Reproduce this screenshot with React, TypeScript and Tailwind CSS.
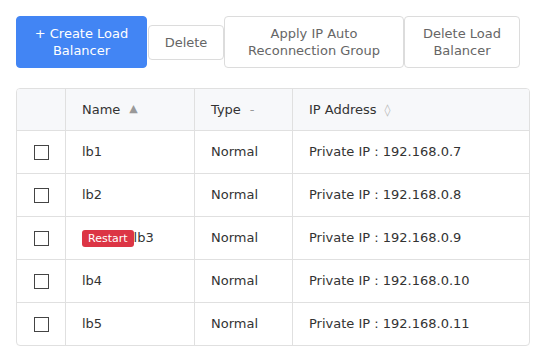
import React from "react";

const rows = [
  { name: "lb1", ip: "192.168.0.7" },
  { name: "lb2", ip: "192.168.0.8" },
  { name: "lb3", ip: "192.168.0.9", restart: true },
  { name: "lb4", ip: "192.168.0.10" },
  { name: "lb5", ip: "192.168.0.11" },
];

const cols = "grid grid-cols-[49px_129px_98px_236px]";

export default function App() {
  return (
    <div
      className="w-[546px] h-[362px] bg-white text-[13px] text-[#333]"
      style={{ fontFamily: '"DejaVu Sans", sans-serif' }}
    >
      <div className="flex items-center pl-4 pt-4">
        <button className="w-[131px] py-2 leading-[17px] rounded border border-[#4285f4] bg-[#4285f4] text-white text-center">
          + Create Load Balancer
        </button>
        <button className="ml-px w-[76px] py-2 leading-[17px] rounded border border-[#dcdcdc] bg-white text-[#666] text-center">
          Delete
        </button>
        <button className="w-[180px] py-2 leading-[17px] rounded border border-[#dcdcdc] bg-white text-[#666] text-center">
          Apply IP Auto Reconnection Group
        </button>
        <button className="w-[116px] px-2 py-2 leading-[17px] rounded border border-[#dcdcdc] bg-white text-[#666] text-center">
          Delete Load Balancer
        </button>
      </div>

      <div className="ml-4 mt-5 w-[514px] border border-[#e0e0e0] rounded overflow-hidden">
        <div className={`${cols} h-[42px] bg-[#f7f8fa] border-b border-[#e0e0e0]`}>
          <div className="border-r border-[#e0e0e0]" />
          <div className="border-r border-[#e0e0e0] px-4 flex items-center">
            Name
            <span className="ml-[9px] text-[#999] text-[11px]">▲</span>
          </div>
          <div className="border-r border-[#e0e0e0] pl-4 flex items-center">
            Type
            <span className="ml-[9px] text-[#999]">-</span>
          </div>
          <div className="pl-4 flex items-center">
            IP Address
            <span className="ml-[8px] text-[#bbb] text-[12px]">◊</span>
          </div>
        </div>
        {rows.map((r, i) => (
          <div
            key={r.name}
            className={`${cols} ${i < rows.length - 1 ? "h-[43px] border-b" : "h-[42px]"} border-[#e0e0e0]`}
          >
            <div className="border-r border-[#e0e0e0] flex items-center justify-center">
              <div className="w-[15px] h-[15px] border border-[#444]" />
            </div>
            <div className="border-r border-[#e0e0e0] pl-4 flex items-center">
              {r.restart && (
                <span className="bg-[#dc3545] text-white text-[11px] leading-[17px] px-[6px] rounded-[3px]">
                  Restart
                </span>
              )}
              {r.name}
            </div>
            <div className="border-r border-[#e0e0e0] pl-4 flex items-center">Normal</div>
            <div className="pl-4 flex items-center">Private IP : {r.ip}</div>
          </div>
        ))}
      </div>
    </div>
  );
}
